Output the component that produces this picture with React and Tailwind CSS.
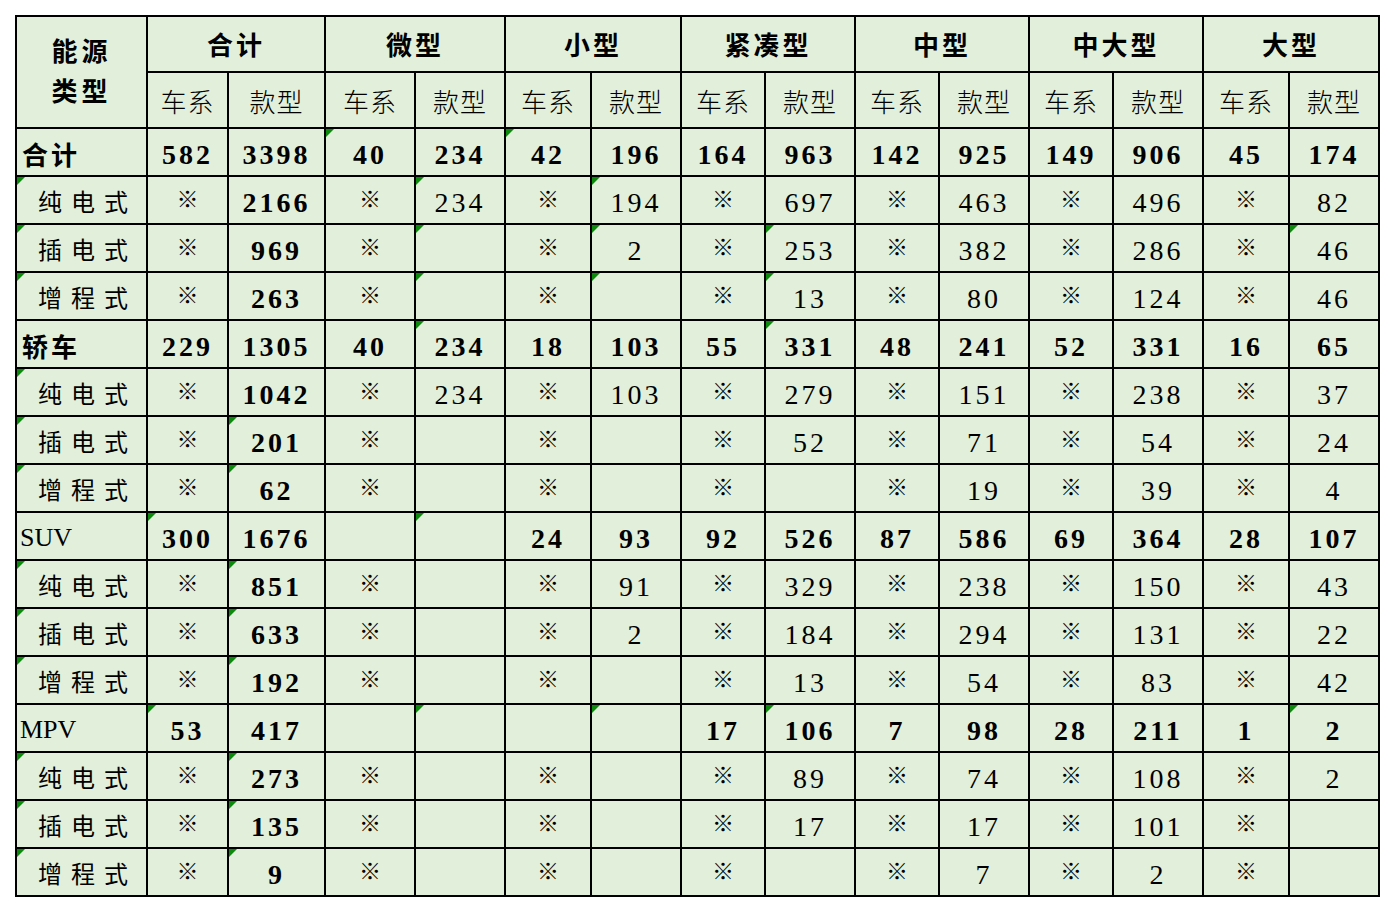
const cols = [131, 81, 97, 90, 90, 86, 90, 84, 90, 84, 90, 84, 90, 86, 90];
const groups = ["合计", "微型", "小型", "紧凑型", "中型", "中大型", "大型"];

const X = "※";

// [label, kind, values, triangle column indexes (0 = label col)]
const rows = [
  ["合计", "total", ["582", "3398", "40", "234", "42", "196", "164", "963", "142", "925", "149", "906", "45", "174"], [3, 5]],
  ["纯电式", "sub", [X, "2166", X, "234", X, "194", X, "697", X, "463", X, "496", X, "82"], [0, 4, 6]],
  ["插电式", "sub", [X, "969", X, "", X, "2", X, "253", X, "382", X, "286", X, "46"], [0, 4, 6, 8, 14]],
  ["增程式", "sub", [X, "263", X, "", X, "", X, "13", X, "80", X, "124", X, "46"], [0, 4, 6, 8]],
  ["轿车", "total", ["229", "1305", "40", "234", "18", "103", "55", "331", "48", "241", "52", "331", "16", "65"], [4, 8]],
  ["纯电式", "sub", [X, "1042", X, "234", X, "103", X, "279", X, "151", X, "238", X, "37"], [0]],
  ["插电式", "sub", [X, "201", X, "", X, "", X, "52", X, "71", X, "54", X, "24"], [0, 2]],
  ["增程式", "sub", [X, "62", X, "", X, "", X, "", X, "19", X, "39", X, "4"], [0, 2]],
  ["SUV", "latin", ["300", "1676", "", "", "24", "93", "92", "526", "87", "586", "69", "364", "28", "107"], [1, 4]],
  ["纯电式", "sub", [X, "851", X, "", X, "91", X, "329", X, "238", X, "150", X, "43"], [0, 2]],
  ["插电式", "sub", [X, "633", X, "", X, "2", X, "184", X, "294", X, "131", X, "22"], [0, 2]],
  ["增程式", "sub", [X, "192", X, "", X, "", X, "13", X, "54", X, "83", X, "42"], [0, 2]],
  ["MPV", "latin", ["53", "417", "", "", "", "", "17", "106", "7", "98", "28", "211", "1", "2"], [1, 4, 6, 8, 14]],
  ["纯电式", "sub", [X, "273", X, "", X, "", X, "89", X, "74", X, "108", X, "2"], [0, 2]],
  ["插电式", "sub", [X, "135", X, "", X, "", X, "17", X, "17", X, "101", X, ""], [0, 2]],
  ["增程式", "sub", [X, "9", X, "", X, "", X, "", X, "7", X, "2", X, ""], [0, 2]],
];

function Flag() {
  return (
    <span className="absolute left-0 top-0 h-0 w-0 border-t-[8px] border-r-[8px] border-t-[#0b8a0b] border-r-transparent" />
  );
}

function Value({ v, bold }) {
  if (v === X) {
    return (
      <span className="relative -top-[6px] text-[22px] font-['Noto_Sans_CJK_SC',sans-serif]">
        {v}
      </span>
    );
  }
  return (
    <span
      className={`text-[28px] tracking-[3px] font-['Liberation_Serif',serif] ${
        bold ? "font-bold" : "font-normal"
      }`}
    >
      {v}
    </span>
  );
}

function Label({ text, kind }) {
  if (kind === "sub") {
    return (
      <span className="pl-[21px] text-[24px] tracking-[9px] font-['Noto_Sans_CJK_SC',sans-serif]">
        {text}
      </span>
    );
  }
  if (kind === "latin") {
    return (
      <span className="pl-[3px] text-[26px] font-['Liberation_Serif',serif]">
        {text}
      </span>
    );
  }
  return (
    <span className="pl-[5px] text-[26px] font-bold tracking-[3px] font-['Noto_Sans_CJK_SC',sans-serif]">
      {text}
    </span>
  );
}

export default function App() {
  return (
    <div className="min-h-[912px] w-[1394px] bg-white pl-[15px] pt-[15px]">
      <table className="table-fixed border-collapse bg-[#e2efda] text-black">
        <colgroup>
          {cols.map((w, i) => (
            <col key={i} style={{ width: w }} />
          ))}
        </colgroup>
        <thead>
          <tr className="h-[56px]">
            <th
              rowSpan={2}
              className="border-2 border-black pb-[4px] text-center text-[26px] font-bold leading-[40px] tracking-[4px] font-['Noto_Sans_CJK_SC',sans-serif]"
            >
              <div>能源</div>
              <div>类型</div>
            </th>
            {groups.map((g) => (
              <th
                key={g}
                colSpan={2}
                className="border-2 border-black pb-[2px] text-center text-[26px] font-bold tracking-[3px] font-['Noto_Sans_CJK_SC',sans-serif]"
              >
                {g}
              </th>
            ))}
          </tr>
          <tr className="h-[56px]">
            {groups.map((g) =>
              ["车系", "款型"].map((s) => (
                <th
                  key={g + s}
                  className="border-2 border-black pt-[1px] text-center text-[26px] font-light tracking-[1px] font-['Noto_Sans_CJK_SC',sans-serif]"
                >
                  {s}
                </th>
              ))
            )}
          </tr>
        </thead>
        <tbody>
          {rows.map(([label, kind, values, flags], r) => (
            <tr key={r} className="h-[48px]">
              <td className="relative border-2 border-black pt-[2px] text-left align-middle">
                {flags.includes(0) && <Flag />}
                <Label text={label} kind={kind} />
              </td>
              {values.map((v, c) => (
                <td
                  key={c}
                  className="relative border-2 border-black pt-[6px] text-center align-middle leading-none"
                >
                  {flags.includes(c + 1) && <Flag />}
                  <Value v={v} bold={kind !== "sub" || c === 1} />
                </td>
              ))}
            </tr>
          ))}
        </tbody>
      </table>
    </div>
  );
}
